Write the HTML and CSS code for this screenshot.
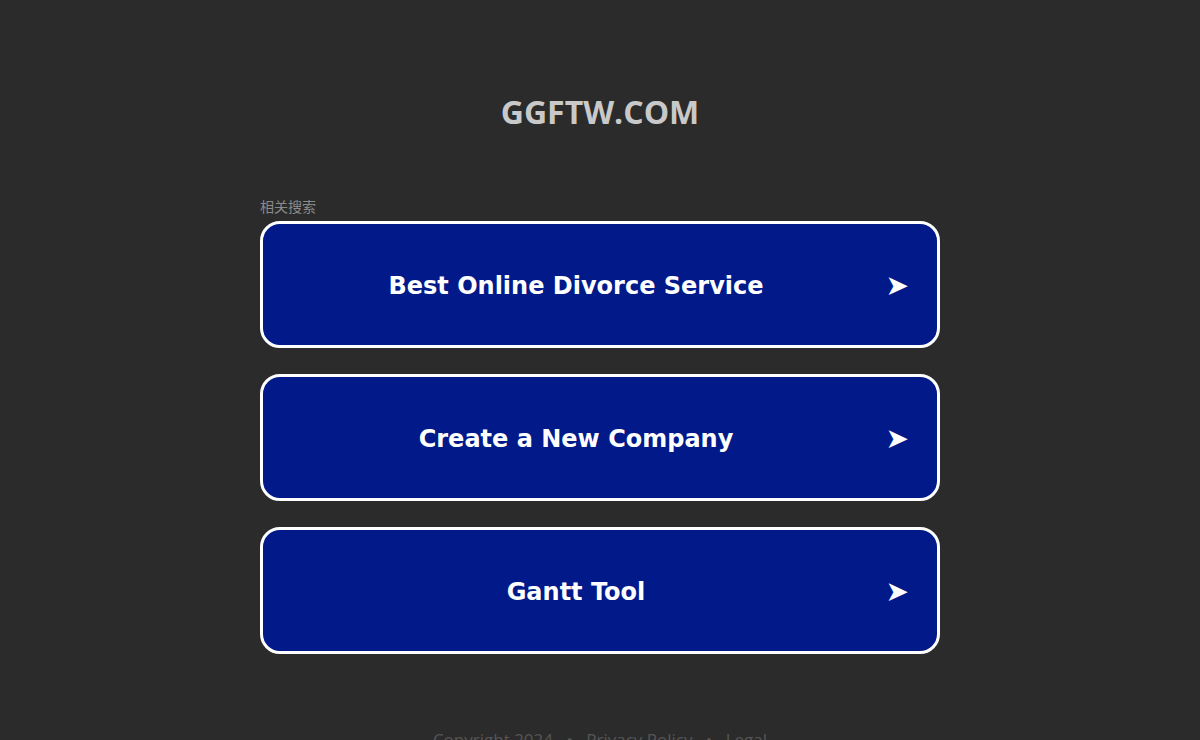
FILE: index.html
```html
<!DOCTYPE html>
<html>
<head>
<meta charset="utf-8">
<link rel="stylesheet" href="styles.css">
</head>
<body>
<div class="page">
  <header class="header"><h1 class="title">GGFTW.COM</h1></header>
  <main class="main">
    <div class="label">相关搜索</div>
    <ul class="links">
      <li><a class="link" href="#"><span class="link-text">Best Online Divorce Service</span><span class="arrow">➤</span></a></li>
      <li><a class="link" href="#"><span class="link-text">Create a New Company</span><span class="arrow">➤</span></a></li>
      <li><a class="link" href="#"><span class="link-text">Gantt Tool</span><span class="arrow">➤</span></a></li>
    </ul>
  </main>
  <footer class="footer">Copyright 2024 <span class="dot">•</span> Privacy Policy <span class="dot">•</span> Legal</footer>
</div>
</body>
</html>
```
FILE: styles.css
```css
html, body {
  margin: 0;
  padding: 0;
  background: #2b2b2b;
}
.page {
  width: 680px;
  margin: 0 auto;
  font-family: "Open Sans", sans-serif;
}
.header {
  padding-top: 92px;
  height: 108px;
  box-sizing: border-box;
}
.title {
  margin: 0;
  text-align: center;
  font-size: 32px;
  font-weight: 700;
  line-height: 40px;
  color: #c9c9c9;
}
.main {
  padding-top: 90px;
}
.label {
  font-family: "Noto Sans CJK SC", sans-serif;
  font-size: 14px;
  line-height: 16px;
  color: #8a8a8a;
  margin-bottom: 7px;
}
.links {
  list-style: none;
  margin: 0;
  padding: 0;
  display: flex;
  flex-direction: column;
  gap: 26px;
}
.link {
  display: flex;
  align-items: center;
  justify-content: center;
  position: relative;
  height: 127px;
  box-sizing: border-box;
  border: 3px solid #ffffff;
  border-radius: 20px;
  background: #011989;
  text-decoration: none;
  color: #ffffff;
  padding-right: 48px;
  padding-top: 2px;
}
.link-text {
  font-family: "DejaVu Sans", Verdana, sans-serif;
  font-weight: 700;
  font-size: 24px;
}
.arrow {
  position: absolute;
  right: 28px;
  top: 50%;
  transform: translateY(-50%);
  font-family: "DejaVu Sans", sans-serif;
  font-size: 28px;
  color: #fff;
}
.footer {
  margin-top: 74px;
  text-align: center;
  font-size: 17px;
  color: #555555;
}
.dot {
  margin: 0 9px;
}
```
